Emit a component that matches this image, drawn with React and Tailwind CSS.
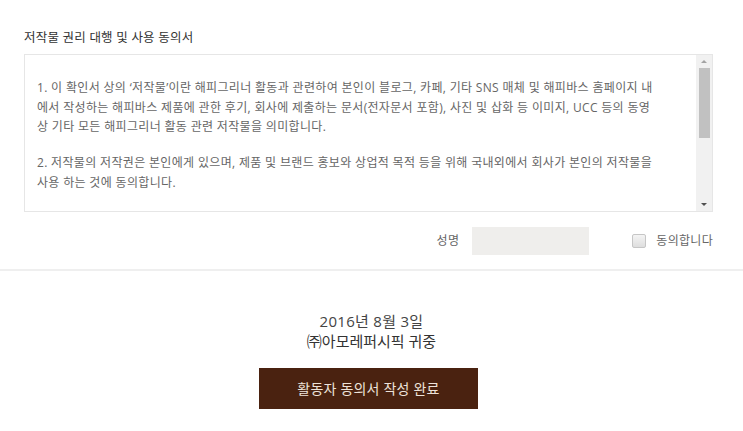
import React from 'react';

const font = { fontFamily: '"Open Sans", "Noto Sans CJK KR", sans-serif' };

const paragraphs = [
  [
    '1. 이 확인서 상의 ‘저작물’이란 해피그리너 활동과 관련하여 본인이 블로그, 카페, 기타 SNS 매체 및 해피바스 홈페이지 내',
    '에서 작성하는 해피바스 제품에 관한 후기, 회사에 제출하는 문서(전자문서 포함), 사진 및 삽화 등 이미지, UCC 등의 동영',
    '상 기타 모든 해피그리너 활동 관련 저작물을 의미합니다.',
  ],
  [
    '2. 저작물의 저작권은 본인에게 있으며, 제품 및 브랜드 홍보와 상업적 목적 등을 위해 국내외에서 회사가 본인의 저작물을',
    '사용 하는 것에 동의합니다.',
  ],
];

// fake scrollbar, drawn like the one in the screenshot
const Scrollbar = () => (
  <div className="w-[16px] h-full bg-[#f1f1f1] flex flex-col items-center">
    <div className="h-[13px] w-full flex items-center justify-center">
      <span className="border-x-[3px] border-x-transparent border-b-[3px] border-b-[#a3a3a3]"></span>
    </div>
    <div className="w-[11px] h-[70px] bg-[#c1c1c1]"></div>
    <div className="flex-1"></div>
    <div className="h-[13px] w-full flex items-center justify-center">
      <span className="border-x-[3px] border-x-transparent border-t-[3px] border-t-[#505050]"></span>
    </div>
  </div>
);

const App = () => {
  return (
    <div className="w-[743px] h-[431px] bg-white overflow-hidden" style={font}>
      <div className="pl-[24px] pr-[30px] pt-[29px]">
        <h2 className="text-[12.5px] leading-[18px] tracking-[0.2px] text-[#333333] font-normal">저작물 권리 대행 및 사용 동의서</h2>

        <div className="mt-[7px] h-[158px] border border-[#e6e6e6] flex">
          <div className="flex-1 overflow-hidden pl-[12px] pt-[23px] text-[12px] leading-[19.5px] tracking-[0.33px] text-[#666666]">
            {paragraphs.map((lines, i) => (
              <p key={i} className={i > 0 ? 'mt-[16.5px]' : ''}>
                {lines.map((line, j) => (
                  <span key={j} className="block whitespace-nowrap">{line}</span>
                ))}
              </p>
            ))}
          </div>
          <Scrollbar />
        </div>

        <div className="mt-[15px] h-[28px] flex items-center justify-end text-[12px] tracking-[0.3px] text-[#666666]">
          <span>성명</span>
          <input type="text" className="ml-[13px] w-[117px] h-[28px] bg-[#efeeec] outline-none" />
          <label className="ml-[43px] flex items-center">
            <span className="w-[14px] h-[14px] rounded-[2px] border border-[#c6c6c6] bg-gradient-to-b from-[#f4f4f4] to-[#dedede]"></span>
            <span className="ml-[10px]">동의합니다</span>
          </label>
        </div>
      </div>

      <div className="mt-[14px] border-t-2 border-[#efefef]"></div>

      <div className="pt-[40px] flex flex-col items-center text-[#444444]">
        <p className="text-[15px] leading-[20px] tracking-[0.3px]">2016년 8월 3일</p>
        <p className="text-[15px] leading-[21px] font-normal text-[#333333]">㈜아모레퍼시픽 귀중</p>
        <div className="pr-[6px] mt-[16px]">
          <button className="w-[219px] h-[41px] bg-[#4a2210] text-[#eee3da] text-[14px] tracking-[0.2px]">
            활동자 동의서 작성 완료
          </button>
        </div>
      </div>
    </div>
  );
};

export default App;
